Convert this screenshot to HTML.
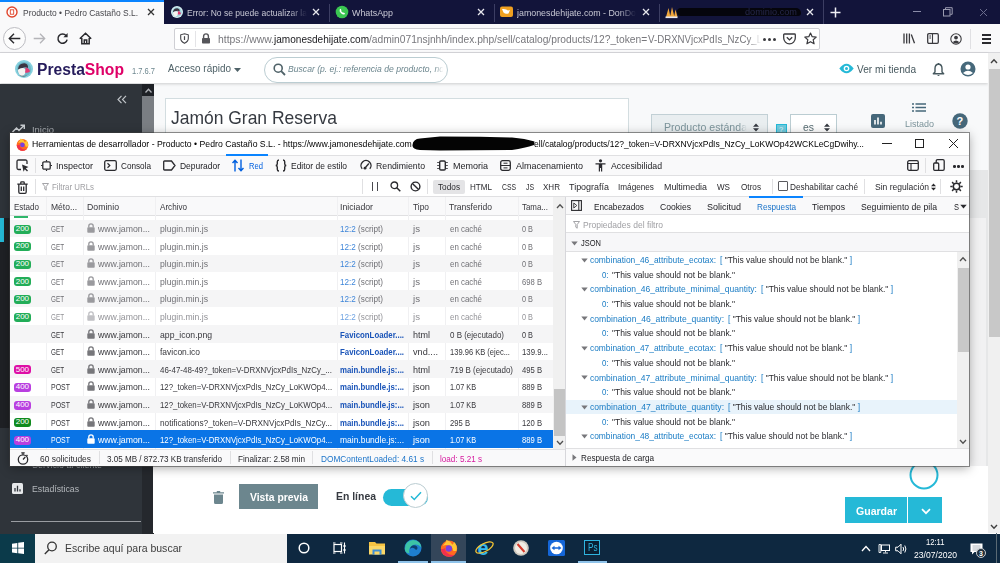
<!DOCTYPE html>
<html lang="es"><head><meta charset="utf-8"><title>Producto</title><style>
html,body{margin:0;padding:0;}
body{width:1000px;height:563px;overflow:hidden;position:relative;background:#fff;font-family:"Liberation Sans",sans-serif;}
div,span,svg{position:absolute;box-sizing:border-box;}
.t{white-space:nowrap;line-height:1;transform-origin:0 0;padding-bottom:4px;}
.t span{position:static;}
</style></head><body>
<div style="left:0px;top:0px;width:1000px;height:24px;background:#12143a;"></div>
<div style="left:0px;top:0px;width:164px;height:24px;background:#f9f9fa;border-top:2px solid #0a84ff;"></div>
<svg style="left:6px;top:6px;" width="12" height="12" viewBox="0 0 12 12"><circle cx="6" cy="6" r="5" fill="#fff" stroke="#e0452c" stroke-width="1.4"/><rect x="4.3" y="3.8" width="3.4" height="4.4" fill="none" stroke="#e0452c" stroke-width="0.9"/></svg>
<span class="t" style="left:23px;top:8.11px;font-size:9.8px;color:#48484d;transform:scaleX(0.861);">Producto • Pedro Castaño S.L.</span>
<svg style="left:147px;top:8px;" width="8" height="8" viewBox="0 0 8 8"><path d="M1 1 L7 7 M7 1 L1 7" stroke="#333" stroke-width="1.3" fill="none"/></svg>
<svg style="left:171px;top:6px;" width="12" height="12" viewBox="0 0 18 18"><circle cx="9" cy="9" r="9" fill="#d8eef2"/><circle cx="9" cy="9.200" r="7.200" fill="#9fd3dd"/><path d="M3 9.500 Q3.500 3 9.500 3.200 Q13.500 4 13 8 Q10 6.500 7.500 8 Q5 9 3 9.500z" fill="#3b3542"/><path d="M2.800 10 Q5.500 7.500 9 8.200 Q11 9 10.500 12 Q10 15.500 6.500 16 Q3.500 15 2.800 10z" fill="#f6f4f2"/><path d="M10.200 7.500 Q14.500 8 15 11.500 Q12.500 13.500 10 12.500 Q11 10 10.200 7.500z" fill="#e23d74"/></svg>
<span class="t" style="left:187px;top:8.11px;font-size:9.8px;color:#c8c8d4;-webkit-mask-image:linear-gradient(90deg,#000 85%,transparent);transform:scaleX(0.871);">Error: No se puede actualizar la</span>
<svg style="left:312px;top:8px;" width="8" height="8" viewBox="0 0 8 8"><path d="M1 1 L7 7 M7 1 L1 7" stroke="#e8e8ee" stroke-width="1.3" fill="none"/></svg>
<div style="left:329px;top:4px;width:1px;height:18px;background:#3c3e63;"></div>
<svg style="left:335px;top:5px;" width="14" height="14" viewBox="0 0 14 14"><circle cx="7" cy="7" r="6.3" fill="#3bc652"/><path d="M3 11.6 L3.9 9 " stroke="#3bc652" stroke-width="2"/><path d="M4.8 4.2 q0.8 -0.8 1.3 0.3 l0.3 0.9 q-0.6 0.6 0.6 1.7 q1 1 1.6 0.5 l0.9 0.4 q0.9 0.5 0.1 1.2 q-1.3 1 -3.6 -1 q-2.2 -2.2 -1.2 -4z" fill="#fff"/></svg>
<span class="t" style="left:352px;top:8.11px;font-size:9.8px;color:#c8c8d4;transform:scaleX(0.907);">WhatsApp</span>
<svg style="left:477px;top:8px;" width="8" height="8" viewBox="0 0 8 8"><path d="M1 1 L7 7 M7 1 L1 7" stroke="#e8e8ee" stroke-width="1.3" fill="none"/></svg>
<div style="left:494px;top:4px;width:1px;height:18px;background:#3c3e63;"></div>
<svg style="left:500px;top:6px;" width="13" height="12" viewBox="0 0 13 12"><rect x="0" y="0.5" width="13" height="10.5" rx="2" fill="#f0a020"/><path d="M2 3 q4 -0.5 6 1.5 l2 -0.5 l-1.5 3.5 q-3 1 -5 -1z" fill="#fff"/></svg>
<span class="t" style="left:517px;top:8.11px;font-size:9.8px;color:#c8c8d4;-webkit-mask-image:linear-gradient(90deg,#000 85%,transparent);transform:scaleX(0.903);">jamonesdehijate.com - DonDo</span>
<svg style="left:642px;top:8px;" width="8" height="8" viewBox="0 0 8 8"><path d="M1 1 L7 7 M7 1 L1 7" stroke="#e8e8ee" stroke-width="1.3" fill="none"/></svg>
<div style="left:659px;top:4px;width:1px;height:18px;background:#3c3e63;"></div>
<svg style="left:665px;top:6px;" width="13" height="13" viewBox="0 0 13 13"><path d="M1 11 L3.5 2 L5.5 11z M5 11 L7 1 L9.5 11z M9 11 L10.5 3.5 L12.5 11z" fill="#f0a63c"/><rect x="0.5" y="10.5" width="12" height="1.6" fill="#e7e7f0"/></svg>
<div style="left:677px;top:8px;width:124px;height:8px;background:#05050c;border-radius:4px 5px 3px 4px;"></div>
<span class="t" style="left:745px;top:8.11px;font-size:9.3px;color:#26284a;transform:scaleX(0.986);">dominio.com</span>
<svg style="left:806px;top:8px;" width="8" height="8" viewBox="0 0 8 8"><path d="M1 1 L7 7 M7 1 L1 7" stroke="#e8e8ee" stroke-width="1.3" fill="none"/></svg>
<div style="left:823px;top:0px;width:1px;height:24px;background:#3c3e63;"></div>
<svg style="left:830px;top:7px;" width="11" height="11" viewBox="0 0 11 11"><path d="M5.5 0.5 V10.500 M0.5 5.5 H10.5" stroke="#f0f0f5" stroke-width="1.5"/></svg>
<div style="left:913px;top:11px;width:8px;height:1px;background:#8a8ca8;"></div>
<svg style="left:943px;top:7px;" width="10" height="10" viewBox="0 0 10 10"><rect x="0.500" y="2.5" width="6.5" height="6.5" fill="none" stroke="#9a9bb0" stroke-width="1"/><path d="M2.5 2.500 V0.700 H9.200 V7.300 H7.200" fill="none" stroke="#9a9bb0" stroke-width="1"/></svg>
<svg style="left:978.5px;top:7.5px;" width="9.0" height="9.0" viewBox="0 0 9.0 9.0"><path d="M1 1 L8.0 8.0 M8.0 1 L1 8.0" stroke="#6a6c8c" stroke-width="1" fill="none"/></svg>
<div style="left:0px;top:24px;width:1000px;height:29px;background:#f9f9fa;border-bottom:1px solid #d7d7db;"></div>
<div style="left:3px;top:27px;width:23px;height:23px;border:1px solid #bdbdc2;border-radius:50%;background:#fcfcfc;"></div>
<svg style="left:8px;top:33px;" width="13" height="11" viewBox="0 0 13 11"><path d="M6 0.800 L1.3 5.500 L6 10.200 M1.500 5.500 H12.300" stroke="#2a2a2e" stroke-width="1.400" fill="none"/></svg>
<svg style="left:33px;top:33px;" width="13" height="11" viewBox="0 0 13 11"><path d="M7 0.800 L11.700 5.500 L7 10.200 M11.500 5.500 H0.700" stroke="#b4b4b8" stroke-width="1.300" fill="none"/></svg>
<svg style="left:56px;top:32px;" width="13" height="13" viewBox="0 0 13 13"><path d="M10.200 3.800 A4.600 4.600 0 1 0 11.100 7.600" stroke="#2a2a2e" stroke-width="1.500" fill="none"/><path d="M11.600 1 V5.200 H7.400z" fill="#2a2a2e"/></svg>
<svg style="left:79px;top:32px;" width="13" height="13" viewBox="0 0 13 13"><path d="M0.800 6.800 L6.500 1.300 L12.200 6.800 M2.800 6 V11.700 H10.200 V6 M5.300 11.700 V8 H7.700 V11.700" stroke="#2a2a2e" stroke-width="1.500" fill="none"/></svg>
<div style="left:174px;top:28px;width:646px;height:22px;background:#fff;border:1px solid #cfcfd4;border-radius:2px;"></div>
<svg style="left:180px;top:33px;" width="9" height="11" viewBox="0 0 9 11"><path d="M4.500 0.700 L8.300 1.800 V5.600 Q8.300 8.600 4.500 10.300 Q0.700 8.600 0.700 5.600 V1.800z" fill="none" stroke="#45454a" stroke-width="1.100"/><rect x="3.900" y="3.200" width="1.200" height="3.800" fill="#45454a"/></svg>
<div style="left:195px;top:31px;width:1px;height:16px;background:#e4e4e7;"></div>
<svg style="left:201px;top:33px;" width="10" height="11" viewBox="0 0 10 11"><path d="M2.600 5 V3.300 a2.400 2.400 0 0 1 4.800 0 V5" fill="none" stroke="#55555a" stroke-width="1.400"/><rect x="1" y="5" width="8" height="5.500" rx="0.800" fill="#55555a"/></svg>
<span class="t" style="left:218px;top:33.59px;font-size:11px;color:#77777c;transform:scaleX(0.944);">https://www.</span>
<span class="t" style="left:274px;top:33.59px;font-size:11px;color:#1a1a1e;transform:scaleX(0.914);">jamonesdehijate.com</span>
<span class="t" style="left:369px;top:33.59px;font-size:11px;color:#77777c;transform:scaleX(0.931);">/admin071nsjnhh/index.php/sell/catalog/products/12?_token=</span>
<span class="t" style="left:648px;top:33.59px;font-size:11px;color:#77777c;-webkit-mask-image:linear-gradient(90deg,#000 88%,transparent 99%);transform:scaleX(0.880);">V-DRXNVjcxPdIs_NzCy_L</span>
<div style="left:763px;top:38px;width:3px;height:3px;background:#3a3a3e;border-radius:50%;"></div>
<div style="left:768px;top:38px;width:3px;height:3px;background:#3a3a3e;border-radius:50%;"></div>
<div style="left:773px;top:38px;width:3px;height:3px;background:#3a3a3e;border-radius:50%;"></div>
<svg style="left:783px;top:33px;" width="13" height="12" viewBox="0 0 13 12"><path d="M1.500 1 H11.500 Q12.300 1 12.300 1.800 V5 A5.800 5.800 0 0 1 0.700 5 V1.800 Q0.700 1 1.500 1z" fill="none" stroke="#3a3a3e" stroke-width="1.300"/><path d="M3.800 4.300 L6.500 6.900 L9.200 4.300" fill="none" stroke="#3a3a3e" stroke-width="1.400"/></svg>
<svg style="left:804px;top:32px;" width="13" height="13" viewBox="0 0 13 13"><path d="M6.500 1 L8.200 4.700 L12.200 5.100 L9.200 7.800 L10.100 11.800 L6.500 9.700 L2.900 11.800 L3.800 7.800 L0.800 5.100 L4.800 4.700z" fill="none" stroke="#3a3a3e" stroke-width="1.200" stroke-linejoin="round"/></svg>
<svg style="left:903px;top:33px;" width="13" height="11" viewBox="0 0 13 11"><path d="M1 0.500 V10.500 M3.700 0.500 V10.500 M6.400 0.500 V10.500 M8.300 1.500 L11.500 10.300" stroke="#3a3a3e" stroke-width="1.300" fill="none"/></svg>
<svg style="left:927px;top:33px;" width="12" height="11" viewBox="0 0 12 11"><rect x="0.700" y="0.700" width="10.600" height="9.600" rx="1.200" fill="none" stroke="#3a3a3e" stroke-width="1.300"/><path d="M5.500 0.700 V10.300 M2.300 3 H4 M2.300 5 H4" stroke="#3a3a3e" stroke-width="1.100"/></svg>
<svg style="left:950px;top:33px;" width="12" height="12" viewBox="0 0 12 12"><circle cx="6" cy="6" r="5.200" fill="none" stroke="#3a3a3e" stroke-width="1.100"/><circle cx="6" cy="4.600" r="1.900" fill="#3a3a3e"/><path d="M2.600 9.300 Q6 5.800 9.400 9.300 Q6 11.500 2.600 9.300z" fill="#3a3a3e"/></svg>
<div style="left:970px;top:29px;width:1px;height:20px;background:#e0e0e3;"></div>
<div style="left:982px;top:34px;width:9px;height:1.5px;background:#2a2a2e;"></div>
<div style="left:982px;top:38px;width:9px;height:1.5px;background:#2a2a2e;"></div>
<div style="left:982px;top:42px;width:9px;height:1.5px;background:#2a2a2e;"></div>
<div style="left:0px;top:53px;width:988px;height:480px;background:#f8f9fa;"></div>
<div style="left:153px;top:170px;width:835px;height:300px;background:#e6e7e8;"></div>
<div style="left:153px;top:218px;width:833px;height:250px;background:#f1f1f2;"></div>
<div style="left:0px;top:53px;width:988px;height:30px;background:#fff;box-shadow:0 1px 3px rgba(0,0,0,0.18);"></div>
<svg style="left:15px;top:60px;" width="18" height="18" viewBox="0 0 18 18"><circle cx="9" cy="9" r="9" fill="#86d0de"/><circle cx="9" cy="9.200" r="7.200" fill="#6fb9c9"/><path d="M3 9.500 Q3.500 3 9.500 3.200 Q13.500 4 13 8 Q10 6.500 7.500 8 Q5 9 3 9.500z" fill="#3b3542"/><path d="M2.800 10 Q5.500 7.500 9 8.200 Q11 9 10.500 12 Q10 15.500 6.500 16 Q3.500 15 2.800 10z" fill="#f6f4f2"/><path d="M10.200 7.500 Q14.500 8 15 11.500 Q12.500 13.500 10 12.500 Q11 10 10.200 7.500z" fill="#e23d74"/><path d="M4 15.200 Q8 17.500 12.500 15.500 Q9 16.500 4 15.200z" fill="#5a4a45"/></svg>
<span class="t" style="left:37px;top:61.5px;font-size:16px;color:#251b5b;font-weight:bold;transform:scaleX(0.978);"><span style="color:#251b5b">Presta</span><span style="color:#df0067">Shop</span></span>
<span class="t" style="left:132px;top:67.41px;font-size:8.3px;color:#6c868e;transform:scaleX(0.906);">1.7.6.7</span>
<span class="t" style="left:168px;top:63.47px;font-size:10.7px;color:#4f6268;transform:scaleX(0.930);">Acceso rápido</span>
<svg style="left:234px;top:68px;" width="7" height="4" viewBox="0 0 7 4"><path d="M0 0 H7 L3.500 4z" fill="#4f6268"/></svg>
<div style="left:264px;top:57px;width:184px;height:26px;background:#fff;border:1px solid #bbcdd2;border-radius:13px;"></div>
<svg style="left:273px;top:63px;" width="13" height="13" viewBox="0 0 13 13"><circle cx="5.200" cy="5.200" r="4" fill="none" stroke="#4f6268" stroke-width="1.600"/><path d="M8.200 8.200 L12 12" stroke="#4f6268" stroke-width="1.800"/></svg>
<span class="t" style="left:288px;top:65.41px;font-size:9.3px;color:#6c868e;font-style:italic;-webkit-mask-image:linear-gradient(90deg,#000 94%,transparent);transform:scaleX(0.926);">Buscar (p. ej.: referencia de producto, no</span>
<svg style="left:839px;top:63px;" width="15" height="11" viewBox="0 0 15 11"><path d="M0.300 5.500 Q7.500 -4 14.700 5.500 Q7.500 15 0.300 5.500z" fill="#25b9d7"/><circle cx="7.500" cy="5.500" r="2.800" fill="#fff"/><circle cx="7.500" cy="5.500" r="1.500" fill="#25b9d7"/></svg>
<span class="t" style="left:857px;top:64.47px;font-size:10.7px;color:#46585e;transform:scaleX(0.946);">Ver mi tienda</span>
<svg style="left:932px;top:62px;" width="13" height="15" viewBox="0 0 13 15"><path d="M6.500 1 Q6.500 2 6.500 2 Q10 2.500 10 6.500 V10 L11.700 11.700 H1.300 L3 10 V6.500 Q3 2.500 6.500 2" fill="none" stroke="#46585e" stroke-width="1.400" stroke-linejoin="round"/><path d="M5.200 13 H7.800 Q6.500 15 5.200 13z" fill="#46585e"/></svg>
<svg style="left:960px;top:61px;" width="16" height="16" viewBox="0 0 16 16"><circle cx="8" cy="8" r="7.500" fill="#46687a"/><circle cx="8" cy="6" r="2.600" fill="#fff"/><path d="M3 12 Q8 7.500 13 12 Q8 16 3 12z" fill="#fff"/></svg>
<div style="left:0px;top:83.5px;width:142px;height:450px;background:#2f343a;"></div>
<div style="left:142px;top:83.5px;width:11.5px;height:450px;background:#25282d;"></div>
<div style="left:142px;top:83.5px;width:11.5px;height:12.5px;background:#1e2126;"></div>
<svg style="left:144.5px;top:87.5px;" width="7" height="5" viewBox="0 0 7 5"><path d="M0.500 4.500 L3.500 1.300 L6.500 4.500" fill="none" stroke="#b0b3b8" stroke-width="1.300"/></svg>
<div style="left:142px;top:96px;width:11.5px;height:370px;background:#7a7e83;"></div>
<svg style="left:117px;top:95px;" width="10" height="9" viewBox="0 0 10 9"><path d="M4.500 0.800 L1 4.500 L4.500 8.200 M9 0.800 L5.500 4.500 L9 8.200" fill="none" stroke="#c0c4c8" stroke-width="1.200"/></svg>
<svg style="left:12px;top:124px;" width="13" height="9" viewBox="0 0 13 9"><path d="M0.500 8 L4.500 4 L7 6.500 L12 1.500 M8.500 1.200 H12.300 V5" fill="none" stroke="#c8ccd0" stroke-width="1.500"/></svg>
<span class="t" style="left:32px;top:124.65px;font-size:9.9px;color:#a9adb2;transform:scaleX(0.954);">Inicio</span>
<span class="t" style="left:32px;top:459.65px;font-size:9.9px;color:#a9adb2;transform:scaleX(0.911);">Servicio al cliente</span>
<svg style="left:12px;top:483px;" width="11" height="11" viewBox="0 0 11 11"><rect x="0" y="0" width="11" height="11" rx="1.500" fill="#e6e8ea"/><path d="M3 8.500 V5 M5.500 8.500 V2.800 M8 8.500 V6.300" stroke="#2f3339" stroke-width="1.300"/></svg>
<span class="t" style="left:32px;top:483.65px;font-size:9.9px;color:#b4b8bc;transform:scaleX(0.883);">Estadísticas</span>
<div style="left:11px;top:521px;width:130px;height:1px;background:#9a9da2;"></div>
<div style="left:165px;top:98px;width:464px;height:60px;background:#fff;border:1px solid #d3dde0;"></div>
<span class="t" style="left:171px;top:108.53px;font-size:18.6px;color:#363a41;transform:scaleX(0.939);">Jamón Gran Reserva</span>
<div style="left:651px;top:114px;width:117px;height:28px;background:#e9eef0;border:1px solid #c2d0d5;"></div>
<span class="t" style="left:664px;top:121.88px;font-size:11.5px;color:#7c949b;-webkit-mask-image:linear-gradient(90deg,#000 90%,transparent);transform:scaleX(0.921);">Producto estánda</span>
<svg style="left:753px;top:123px;" width="6" height="9" viewBox="0 0 6 9"><path d="M0 3.700 L3 0.500 L6 3.700z M0 5.300 L3 8.500 L6 5.300z" fill="#363a41"/></svg>
<div style="left:775.5px;top:123.5px;width:11px;height:12px;border:1px solid #25b9d7;background:#6fcbde;"></div>
<span class="t" style="left:779px;top:126px;font-size:7.5px;color:#e8f7fa;">?</span>
<div style="left:790px;top:114px;width:47px;height:28px;background:#fff;border:1px solid #bbcdd2;"></div>
<span class="t" style="left:803px;top:121.88px;font-size:11.5px;color:#576c72;transform:scaleX(0.905);">es</span>
<svg style="left:824px;top:123px;" width="6" height="9" viewBox="0 0 6 9"><path d="M0 3.700 L3 0.500 L6 3.700z M0 5.300 L3 8.500 L6 5.300z" fill="#363a41"/></svg>
<svg style="left:871px;top:114px;" width="14" height="14" viewBox="0 0 14 14"><rect x="0" y="0" width="14" height="14" rx="2" fill="#46687a"/><path d="M4 10.500 V6 M7 10.500 V3.500 M10 10.500 V7.800" stroke="#fff" stroke-width="1.600"/></svg>
<svg style="left:912px;top:103px;" width="14" height="9" viewBox="0 0 14 9"><path d="M0 1 H2 M3.500 1 H14 M0 4.500 H2 M3.500 4.500 H14 M0 8 H2 M3.500 8 H14" stroke="#46687a" stroke-width="1.700"/></svg>
<span class="t" style="left:905px;top:119.41px;font-size:9.8px;color:#7c949b;transform:scaleX(0.918);">Listado</span>
<svg style="left:952px;top:113px;" width="16" height="16" viewBox="0 0 16 16"><circle cx="8" cy="8" r="7.700" fill="#46687a"/></svg>
<span class="t" style="left:956.5px;top:115.59px;font-size:11px;color:#fff;font-weight:bold;">?</span>
<div style="left:153px;top:466px;width:835px;height:67px;background:#fff;"></div>
<svg style="left:212.5px;top:490.5px;" width="11" height="13" viewBox="0 0 11 13"><path d="M1 3.500 H10 V11.500 Q10 13 8.500 13 H2.500 Q1 13 1 11.500z M0 1.200 H11 V2.600 H0z M3.800 0 H7.200 V1.500 H3.800z" fill="#6c868e"/></svg>
<div style="left:239px;top:484px;width:79px;height:25px;background:#6c868e;"></div>
<span class="t" style="left:250px;top:491.59px;font-size:11px;color:#fff;font-weight:bold;transform:scaleX(0.942);">Vista previa</span>
<span class="t" style="left:336px;top:490.59px;font-size:11px;color:#363a41;font-weight:bold;transform:scaleX(0.948);">En línea</span>
<div style="left:383px;top:489px;width:45px;height:17px;background:#25b9d7;border-radius:9px;"></div>
<div style="left:403px;top:483px;width:25px;height:25px;background:#fff;border:1px solid #bbcdd2;border-radius:50%;"></div>
<svg style="left:410px;top:491px;" width="12" height="10" viewBox="0 0 12 10"><path d="M1 5.200 L4.300 8.500 L11 1.200" fill="none" stroke="#25b9d7" stroke-width="1.500"/></svg>
<svg style="left:909px;top:460px;" width="30" height="30" viewBox="0 0 30 30"><circle cx="15" cy="15" r="13.500" fill="none" stroke="#25b9d7" stroke-width="2"/></svg>
<div style="left:845px;top:497px;width:62px;height:26px;background:#25b9d7;"></div>
<div style="left:908px;top:497px;width:34px;height:26px;background:#25b9d7;"></div>
<span class="t" style="left:856px;top:505.59px;font-size:11px;color:#fff;font-weight:bold;transform:scaleX(0.958);">Guardar</span>
<svg style="left:921px;top:508px;" width="10" height="7" viewBox="0 0 10 7"><path d="M1 1.200 L5 5.200 L9 1.200" fill="none" stroke="#fff" stroke-width="1.700"/></svg>
<div style="left:988px;top:53px;width:12px;height:480px;background:#f0f0f0;"></div>
<div style="left:989px;top:69px;width:11px;height:268px;background:#c8c8c8;"></div>
<svg style="left:990px;top:58px;" width="8" height="6" viewBox="0 0 8 6"><path d="M1 5 L4 1.800 L7 5" fill="none" stroke="#404040" stroke-width="1.400"/></svg>
<svg style="left:990px;top:524px;" width="8" height="6" viewBox="0 0 8 6"><path d="M1 1 L4 4.200 L7 1" fill="none" stroke="#404040" stroke-width="1.400"/></svg>
<div style="left:0px;top:533.5px;width:1000px;height:30px;background:#0e2840;"></div>
<div style="left:0px;top:533.5px;width:35px;height:30px;background:#0b3a4a;"></div>
<svg style="left:12px;top:542px;" width="12" height="12" viewBox="0 0 12 12"><path d="M0 1.700 L5.300 0.900 V5.700 H0z M6.200 0.800 L12 0 V5.700 H6.200z M0 6.500 H5.300 V11.200 L0 10.400z M6.200 6.500 H12 V12 L6.200 11.200z" fill="#fff"/></svg>
<div style="left:35px;top:533.5px;width:252px;height:30px;background:#f2f2f2;"></div>
<svg style="left:44px;top:541px;" width="13" height="14" viewBox="0 0 13 14"><circle cx="8" cy="5.500" r="4.300" fill="none" stroke="#333" stroke-width="1.300"/><path d="M5 8.800 L0.800 13" stroke="#333" stroke-width="1.400"/></svg>
<span class="t" style="left:65px;top:542.65px;font-size:11.4px;color:#3c3c3c;transform:scaleX(0.924);">Escribe aquí para buscar</span>
<svg style="left:298px;top:542px;" width="12" height="12" viewBox="0 0 12 12"><circle cx="6" cy="6" r="4.800" fill="none" stroke="#fff" stroke-width="1.500"/></svg>
<svg style="left:333px;top:542px;" width="14" height="12" viewBox="0 0 14 12"><rect x="1" y="2.500" width="7.500" height="7" fill="none" stroke="#fff" stroke-width="1.200"/><path d="M0 1 H2.500 M7 1 H9.500 M0 11 H2.500 M7 11 H9.500 M11.500 0.500 V11.500 M10 4 H13 M10 8 H13" stroke="#fff" stroke-width="1.100" fill="none"/></svg>
<svg style="left:369px;top:541px;" width="16" height="14" viewBox="0 0 16 14"><path d="M0 1 H6 L7.500 2.500 H16 V13 H0z" fill="#f6c443"/><rect x="0" y="5" width="16" height="8.500" fill="#fbd868"/><rect x="3.500" y="8.500" width="9" height="5" fill="#3f8fd6"/><rect x="5.500" y="10.500" width="5" height="3" fill="#fbd868"/></svg>
<div style="left:398px;top:561px;width:30px;height:2px;background:#8fc3ea;"></div>
<svg style="left:404px;top:539px;" width="18" height="18" viewBox="0 0 18 18"><circle cx="9" cy="9" r="8.500" fill="#1e7fd0"/><path d="M0.800 10 Q1 2 9 1 Q17 1.500 17.400 8.500 Q13 3.500 7.500 7 Q4 10 5.500 14.500 Q1 14 0.800 10z" fill="#3cc3a5"/><path d="M6 10 Q7 5.500 11.500 6.500 Q14.500 8 13 10.500 Q11 11 10.500 9.500 Q8 8 6 10z" fill="#0d3f6e"/></svg>
<div style="left:431px;top:533.5px;width:35px;height:30px;background:#34465a;"></div>
<div style="left:431px;top:561px;width:35px;height:2px;background:#8fc3ea;"></div>
<svg style="left:440px;top:539px;" width="18" height="18" viewBox="0 0 13 13"><circle cx="6.500" cy="7" r="5.900" fill="#ff6a1f"/><path d="M12 8.500 Q12.700 4.500 10 2 Q10 3.500 9 4.200 Q7.500 1.500 4.500 0.600 Q5 2 3.500 3 Q2.500 3.800 2.200 5 Q4 4 6 4.600 Q9 5 9.500 8.500 Q11 9 12 8.500z" fill="#ffc533"/><circle cx="6.400" cy="6.900" r="2.300" fill="#7a3fe0"/><path d="M0.700 7 Q1 11 4.500 12.500 Q8 13.500 10.500 11.500 Q7 12 5 10 Q3.500 8.500 3.800 6.500 Q2 7.500 0.700 7z" fill="#f0304f"/></svg>
<svg style="left:475px;top:539px;" width="19" height="18" viewBox="0 0 19 18"><text x="2.500" y="16" font-family="Liberation Sans, sans-serif" font-size="20" font-weight="bold" fill="#35b8ee">e</text><ellipse cx="9.500" cy="8.500" rx="9.500" ry="4" fill="none" stroke="#f4c534" stroke-width="1.300" transform="rotate(-28 9.500 8.500)"/></svg>
<svg style="left:513px;top:540px;" width="16" height="16" viewBox="0 0 16 16"><circle cx="8" cy="8" r="7.800" fill="#cfc9bf"/><circle cx="8" cy="8" r="6" fill="#f2ede4"/><path d="M4.500 4 L11.500 12" stroke="#d43a2a" stroke-width="2"/></svg>
<svg style="left:548px;top:540px;" width="17" height="16" viewBox="0 0 17 16"><rect x="0" y="0" width="17" height="16" rx="1.500" fill="#1466d8"/><circle cx="8.500" cy="8" r="6.300" fill="#fff"/><path d="M3.500 8 L6.500 5.800 V7.200 H10.500 V5.800 L13.500 8 L10.500 10.200 V8.800 H6.500 V10.200z" fill="#1466d8"/></svg>
<div style="left:578px;top:561px;width:29px;height:2px;background:#8fc3ea;"></div>
<div style="left:584px;top:540px;width:16px;height:15px;background:#0a1f33;border:1px solid #2fb4e0;"></div>
<span class="t" style="left:587.5px;top:542.5px;font-size:10px;color:#2fb4e0;transform:scaleX(0.814);">Ps</span>
<svg style="left:861px;top:545px;" width="10" height="7" viewBox="0 0 10 7"><path d="M1 6 L5 1.500 L9 6" fill="none" stroke="#fff" stroke-width="1.300"/></svg>
<svg style="left:878px;top:543px;" width="13" height="12" viewBox="0 0 13 12"><rect x="3.500" y="2" width="8" height="5.500" fill="none" stroke="#fff" stroke-width="1"/><path d="M7.500 7.500 V9.500 M5 10 H10 M1 1.500 H2.800 V9.500 H1z" stroke="#fff" stroke-width="0.900" fill="none"/></svg>
<svg style="left:895px;top:543px;" width="13" height="12" viewBox="0 0 13 12"><path d="M0.700 4.200 H3 L6 1.200 V10.800 L3 7.800 H0.700z" fill="none" stroke="#fff" stroke-width="1"/><path d="M8 4 Q9.300 6 8 8 M9.800 2.500 Q12 6 9.800 9.500" fill="none" stroke="#fff" stroke-width="1"/></svg>
<span class="t" style="left:926px;top:537.41px;font-size:9.8px;color:#fff;transform:scaleX(0.777);">12:11</span>
<span class="t" style="left:914px;top:550.41px;font-size:9.8px;color:#fff;transform:scaleX(0.877);">23/07/2020</span>
<svg style="left:970px;top:543px;" width="13" height="12" viewBox="0 0 13 12"><path d="M0.500 0.500 H12.500 V9 H4.500 L2 11.500 V9 H0.500z" fill="#fff"/><path d="M2.500 3 H10.500 M2.500 5 H10.500 M2.500 7 H8" stroke="#5a6878" stroke-width="0.500"/></svg>
<div style="left:976px;top:548px;width:10px;height:10px;background:#20303c;border:1px solid #c8ccd0;border-radius:50%;"></div>
<span class="t" style="left:979px;top:550px;font-size:7px;color:#fff;font-weight:bold;">3</span>
<div style="left:996px;top:533px;width:1px;height:30px;background:#5a6a74;"></div>
<div style="left:0px;top:218px;width:10px;height:24px;background:#202226;"></div>
<div style="left:0px;top:218px;width:4px;height:24px;background:#25b9d7;"></div>
<div style="left:0px;top:242px;width:10px;height:186px;background:#1f2125;"></div>
<div style="left:10px;top:133px;width:959px;height:333px;background:#fff;box-shadow:0 0 0 1px rgba(60,60,60,0.55),0 2px 10px rgba(0,0,0,0.35);"></div>
<svg style="left:16px;top:138px;" width="13" height="13" viewBox="0 0 13 13"><circle cx="6.500" cy="7" r="5.900" fill="#ff6a1f"/><path d="M12 8.500 Q12.700 4.500 10 2 Q10 3.500 9 4.200 Q7.500 1.500 4.500 0.600 Q5 2 3.500 3 Q2.500 3.800 2.200 5 Q4 4 6 4.600 Q9 5 9.500 8.500 Q11 9 12 8.500z" fill="#ffc533"/><circle cx="6.400" cy="6.900" r="2.300" fill="#7a3fe0"/><path d="M0.700 7 Q1 11 4.500 12.500 Q8 13.500 10.500 11.500 Q7 12 5 10 Q3.500 8.500 3.800 6.500 Q2 7.500 0.700 7z" fill="#f0304f"/></svg>
<span class="t" style="left:32px;top:139.41px;font-size:9.8px;color:#000;transform:scaleX(0.886);">Herramientas de desarrollador - Producto • Pedro Castaño S.L. - https://www.jamonesdehijate.com</span>
<svg style="left:410px;top:134px;" width="128" height="20" viewBox="0 0 128 20"><path d="M2.500 11 Q3 5 10 4.500 L30 2.500 L70 2.700 L102 3.500 Q115 4.500 124.500 7.500 L124 11 Q115 14 102 16 L30 16.500 L10 16 Q2 15 2.500 11z" fill="#040404"/></svg>
<span class="t" style="left:534px;top:139.41px;font-size:9.8px;color:#000;transform:scaleX(0.869);">ell/catalog/products/12?_token=V-DRXNVjcxPdIs_NzCy_LoKWOp42WCKLeCgDwihy...</span>
<div style="left:882px;top:143px;width:10px;height:1px;background:#222;"></div>
<div style="left:915px;top:138.5px;width:9px;height:9px;border:1px solid #222;"></div>
<svg style="left:948.0px;top:137.5px;" width="11.0" height="11.0" viewBox="0 0 11.0 11.0"><path d="M1 1 L10.0 10.0 M10.0 1 L1 10.0" stroke="#222" stroke-width="1" fill="none"/></svg>
<div style="left:10px;top:155px;width:959px;height:21px;background:#f9f9fa;border-top:1px solid #e0e0e2;border-bottom:1px solid #e0e0e2;"></div>
<svg style="left:16px;top:159px;" width="13" height="13" viewBox="0 0 13 13"><path d="M11 5 V2.500 Q11 1 9.500 1 H2.500 Q1 1 1 2.500 V9 Q1 10.500 2.500 10.500 H5" fill="none" stroke="#2a2a2e" stroke-width="1.300"/><path d="M6 5.500 L12.500 8 L9.800 9.200 L12 11.500 L11 12.500 L8.800 10.200 L7.600 12.800z" fill="#2a2a2e"/></svg>
<div style="left:35px;top:158px;width:1px;height:15px;background:#e0e0e2;"></div>
<svg style="left:41px;top:160px;" width="11" height="11" viewBox="0 0 11 11"><rect x="1.800" y="1.800" width="7.400" height="7.400" rx="1.200" fill="none" stroke="#2a2a2e" stroke-width="1.300"/><path d="M5.500 0 V1.500 M5.500 9.500 V11 M0 5.500 H1.500 M9.500 5.500 H11" stroke="#2a2a2e" stroke-width="1.200"/></svg>
<span class="t" style="left:56px;top:160.91px;font-size:9.8px;color:#1c1c20;transform:scaleX(0.918);">Inspector</span>
<svg style="left:104px;top:160px;" width="13" height="11" viewBox="0 0 13 11"><rect x="0.700" y="0.700" width="11.600" height="9.600" rx="1.500" fill="none" stroke="#2a2a2e" stroke-width="1.300"/><path d="M3.500 3.300 L5.800 5.500 L3.500 7.700" fill="none" stroke="#2a2a2e" stroke-width="1.200"/></svg>
<span class="t" style="left:121px;top:160.91px;font-size:9.8px;color:#1c1c20;transform:scaleX(0.834);">Consola</span>
<svg style="left:163px;top:160px;" width="13" height="11" viewBox="0 0 13 11"><path d="M1.500 1 H8.500 L12 5.500 L8.500 10 H1.500 Q0.700 10 0.700 9.200 V1.800 Q0.700 1 1.500 1z" fill="none" stroke="#2a2a2e" stroke-width="1.300"/></svg>
<span class="t" style="left:180px;top:160.91px;font-size:9.8px;color:#1c1c20;transform:scaleX(0.864);">Depurador</span>
<div style="left:226px;top:154px;width:42px;height:2px;background:#0a84ff;"></div>
<svg style="left:232px;top:159px;" width="12" height="13" viewBox="0 0 12 13"><path d="M3 12.500 V1.500 M0.500 4 L3 1.200 L5.500 4 M9 0.500 V11.500 M6.500 9 L9 11.800 L11.500 9" fill="none" stroke="#0060df" stroke-width="1.400"/></svg>
<span class="t" style="left:249px;top:160.91px;font-size:9.8px;color:#0060df;transform:scaleX(0.778);">Red</span>
<svg style="left:275px;top:159px;" width="12" height="13" viewBox="0 0 12 13"><path d="M4 1 Q2.300 1 2.300 2.800 V4.800 Q2.300 6.300 0.800 6.500 Q2.300 6.700 2.300 8.200 V10.200 Q2.300 12 4 12 M8 1 Q9.700 1 9.700 2.800 V4.800 Q9.700 6.300 11.200 6.500 Q9.700 6.700 9.700 8.200 V10.200 Q9.700 12 8 12" fill="none" stroke="#2a2a2e" stroke-width="1.400"/></svg>
<span class="t" style="left:291px;top:160.91px;font-size:9.8px;color:#1c1c20;transform:scaleX(0.864);">Editor de estilo</span>
<svg style="left:360px;top:159px;" width="12" height="12" viewBox="0 0 12 12"><path d="M2.200 9.800 A5 5 0 1 1 9.800 9.800" fill="none" stroke="#2a2a2e" stroke-width="1.400"/><path d="M5.500 8.500 L8.800 4.500" stroke="#2a2a2e" stroke-width="1.300"/><circle cx="5" cy="9.200" r="1.400" fill="#2a2a2e"/></svg>
<span class="t" style="left:376px;top:160.91px;font-size:9.8px;color:#1c1c20;transform:scaleX(0.891);">Rendimiento</span>
<svg style="left:437px;top:160px;" width="11" height="11" viewBox="0 0 11 11"><rect x="2.700" y="1" width="5.600" height="9" rx="1.200" fill="none" stroke="#2a2a2e" stroke-width="1.400"/><path d="M0.300 2.500 H1.800 M0.300 5.500 H1.800 M0.300 8.500 H1.800 M9.200 2.500 H10.700 M9.200 5.500 H10.700 M9.200 8.500 H10.700" stroke="#2a2a2e" stroke-width="1"/></svg>
<span class="t" style="left:453px;top:160.91px;font-size:9.8px;color:#1c1c20;transform:scaleX(0.918);">Memoria</span>
<svg style="left:500px;top:160px;" width="11" height="11" viewBox="0 0 11 11"><rect x="0.700" y="0.700" width="9.600" height="9.600" rx="1.800" fill="none" stroke="#2a2a2e" stroke-width="1.300"/><path d="M0.700 5.500 H10.300 M3.500 3.200 H7.500 M3.500 7.900 H7.500" stroke="#2a2a2e" stroke-width="1"/></svg>
<span class="t" style="left:516px;top:160.91px;font-size:9.8px;color:#1c1c20;transform:scaleX(0.918);">Almacenamiento</span>
<svg style="left:595px;top:159px;" width="11" height="13" viewBox="0 0 11 13"><circle cx="5.500" cy="1.800" r="1.600" fill="#2a2a2e"/><path d="M0.500 4.200 H10.500 V5.600 H7.200 V12.500 H6 V9 H5 V12.500 H3.800 V5.600 H0.500z" fill="#2a2a2e"/></svg>
<span class="t" style="left:611px;top:160.91px;font-size:9.8px;color:#1c1c20;transform:scaleX(0.892);">Accesibilidad</span>
<svg style="left:907px;top:160px;" width="12" height="11" viewBox="0 0 12 11"><rect x="0.700" y="0.700" width="10.600" height="9.600" rx="1.500" fill="none" stroke="#2a2a2e" stroke-width="1.300"/><path d="M0.700 3.500 H11.300 M4 3.500 V10.300" stroke="#2a2a2e" stroke-width="1.100"/></svg>
<div style="left:925px;top:158px;width:1px;height:15px;background:#e0e0e2;"></div>
<svg style="left:933px;top:159px;" width="12" height="12" viewBox="0 0 12 12"><rect x="3.200" y="0.700" width="8" height="10.600" rx="1.300" fill="none" stroke="#2a2a2e" stroke-width="1.300"/><rect x="0.700" y="4" width="5" height="7.300" rx="1" fill="#f9f9fa" stroke="#2a2a2e" stroke-width="1.300"/></svg>
<div style="left:953px;top:165px;width:2.5px;height:2.5px;background:#2a2a2e;border-radius:50%;"></div>
<div style="left:957px;top:165px;width:2.5px;height:2.5px;background:#2a2a2e;border-radius:50%;"></div>
<div style="left:961px;top:165px;width:2.5px;height:2.5px;background:#2a2a2e;border-radius:50%;"></div>
<div style="left:10px;top:176px;width:959px;height:21px;background:#fff;border-bottom:1px solid #e0e0e2;"></div>
<svg style="left:17px;top:181px;" width="11" height="13" viewBox="0 0 11 13"><path d="M1.800 3.500 V11 Q1.800 12.300 3 12.300 H8 Q9.200 12.300 9.200 11 V3.500 M0.300 3.200 H10.700 M3.800 3 V1.500 Q3.800 0.800 4.500 0.800 H6.500 Q7.200 0.800 7.200 1.500 V3 M4.300 5.500 V10 M6.700 5.500 V10" fill="none" stroke="#2a2a2e" stroke-width="1.300"/></svg>
<div style="left:35px;top:179px;width:1px;height:15px;background:#e0e0e2;"></div>
<svg style="left:42px;top:183px;" width="7" height="8" viewBox="0 0 7 8"><path d="M0.500 0.500 H6.500 L4.200 3.500 V7.200 L2.800 6.200 V3.500z" fill="none" stroke="#9a9a9e" stroke-width="0.900"/></svg>
<span class="t" style="left:52px;top:182.41px;font-size:9.8px;color:#a0a0a4;transform:scaleX(0.804);">Filtrar URLs</span>
<div style="left:362px;top:179px;width:1px;height:15px;background:#e0e0e2;"></div>
<div style="left:371.5px;top:182px;width:1px;height:9px;background:#4a4a4f;"></div>
<div style="left:377px;top:182px;width:1px;height:9px;background:#4a4a4f;"></div>
<svg style="left:390px;top:181px;" width="11" height="11" viewBox="0 0 11 11"><circle cx="4.300" cy="4.300" r="3.300" fill="none" stroke="#2a2a2e" stroke-width="1.300"/><path d="M6.800 6.800 L10.300 10.300" stroke="#2a2a2e" stroke-width="1.500"/></svg>
<svg style="left:410px;top:181px;" width="11" height="11" viewBox="0 0 11 11"><circle cx="5.500" cy="5.500" r="4.400" fill="none" stroke="#2a2a2e" stroke-width="1.400"/><path d="M2.400 2.400 L8.600 8.600" stroke="#2a2a2e" stroke-width="1.400"/></svg>
<div style="left:427px;top:179px;width:1px;height:15px;background:#e0e0e2;"></div>
<div style="left:433px;top:180px;width:32px;height:14px;background:#e4e4e6;border-radius:2px;"></div>
<span class="t" style="left:438px;top:183.41px;font-size:9.3px;color:#2a2a2e;transform:scaleX(0.887);">Todos</span>
<span class="t" style="left:470px;top:183.41px;font-size:9.3px;color:#2a2a2e;transform:scaleX(0.869);">HTML</span>
<span class="t" style="left:502px;top:183.41px;font-size:9.3px;color:#2a2a2e;transform:scaleX(0.732);">CSS</span>
<span class="t" style="left:526px;top:183.41px;font-size:9.3px;color:#2a2a2e;transform:scaleX(0.737);">JS</span>
<span class="t" style="left:543px;top:183.41px;font-size:9.3px;color:#2a2a2e;transform:scaleX(0.866);">XHR</span>
<span class="t" style="left:569px;top:183.41px;font-size:9.3px;color:#2a2a2e;transform:scaleX(0.963);">Tipografía</span>
<span class="t" style="left:618px;top:183.41px;font-size:9.3px;color:#2a2a2e;transform:scaleX(0.881);">Imágenes</span>
<span class="t" style="left:664px;top:183.41px;font-size:9.3px;color:#2a2a2e;transform:scaleX(0.957);">Multimedia</span>
<span class="t" style="left:717px;top:183.41px;font-size:9.3px;color:#2a2a2e;transform:scaleX(0.868);">WS</span>
<span class="t" style="left:741px;top:183.41px;font-size:9.3px;color:#2a2a2e;transform:scaleX(0.880);">Otros</span>
<div style="left:772px;top:179px;width:1px;height:15px;background:#e0e0e2;"></div>
<div style="left:778px;top:181px;width:10px;height:10px;background:#fff;border:1px solid #5a5a5e;border-radius:1px;"></div>
<span class="t" style="left:790px;top:183.41px;font-size:9.3px;color:#2a2a2e;transform:scaleX(0.889);">Deshabilitar caché</span>
<div style="left:864px;top:179px;width:1px;height:15px;background:#e0e0e2;"></div>
<span class="t" style="left:875px;top:183.41px;font-size:9.3px;color:#2a2a2e;transform:scaleX(0.916);">Sin regulación</span>
<svg style="left:931px;top:183px;" width="5" height="8" viewBox="0 0 5 8"><path d="M0 3.200 L2.500 0.500 L5 3.200z M0 4.800 L2.500 7.500 L5 4.800z" fill="#2a2a2e"/></svg>
<div style="left:940px;top:179px;width:1px;height:15px;background:#e0e0e2;"></div>
<svg style="left:950px;top:180px;" width="13" height="13" viewBox="0 0 13 13"><circle cx="6.500" cy="6.500" r="3.200" fill="none" stroke="#2a2a2e" stroke-width="1.500"/><path d="M6.500 0.300 V2.600 M6.500 10.400 V12.700 M0.300 6.500 H2.600 M10.400 6.500 H12.700 M2.100 2.100 L3.700 3.700 M9.300 9.300 L10.900 10.900 M2.100 10.900 L3.700 9.300 M9.300 3.700 L10.900 2.100" stroke="#2a2a2e" stroke-width="1.500"/></svg>
<div style="left:10px;top:197px;width:556px;height:19px;background:#f9f9fa;border-bottom:1px solid #e0e0e2;"></div>
<span class="t" style="left:14px;top:202.41px;font-size:9.8px;color:#38383d;transform:scaleX(0.819);">Estado</span>
<span class="t" style="left:51px;top:202.41px;font-size:9.8px;color:#38383d;transform:scaleX(0.868);">Méto...</span>
<span class="t" style="left:87px;top:202.41px;font-size:9.8px;color:#38383d;transform:scaleX(0.890);">Dominio</span>
<span class="t" style="left:160px;top:202.41px;font-size:9.8px;color:#38383d;transform:scaleX(0.826);">Archivo</span>
<span class="t" style="left:340px;top:202.41px;font-size:9.8px;color:#38383d;transform:scaleX(0.891);">Iniciador</span>
<span class="t" style="left:413px;top:202.41px;font-size:9.8px;color:#38383d;transform:scaleX(0.855);">Tipo</span>
<span class="t" style="left:449px;top:202.41px;font-size:9.8px;color:#38383d;transform:scaleX(0.874);">Transferido</span>
<span class="t" style="left:522px;top:202.41px;font-size:9.8px;color:#38383d;transform:scaleX(0.809);">Tama...</span>
<div style="left:46px;top:197px;width:1px;height:252px;background:#f0f0f2;"></div>
<div style="left:83px;top:197px;width:1px;height:252px;background:#f0f0f2;"></div>
<div style="left:155px;top:197px;width:1px;height:252px;background:#f0f0f2;"></div>
<div style="left:337px;top:197px;width:1px;height:252px;background:#f0f0f2;"></div>
<div style="left:408px;top:197px;width:1px;height:252px;background:#f0f0f2;"></div>
<div style="left:445px;top:197px;width:1px;height:252px;background:#f0f0f2;"></div>
<div style="left:518px;top:197px;width:1px;height:252px;background:#f0f0f2;"></div>
<div style="left:14px;top:216px;width:14px;height:1.5px;background:#2fb66a;"></div>
<div style="left:10px;top:219.5px;width:543px;height:17.6px;background:#f5f5f6;"></div>
<div style="left:14px;top:224.5px;width:16.5px;height:9px;background:#22ad58;border-radius:3px;"></div>
<span class="t" style="left:15.7px;top:224.8px;font-size:8px;color:#fff;font-family:"Liberation Mono",monospace;font-weight:bold;transform:scaleX(0.973);">200</span>
<span class="t" style="left:51px;top:223.91px;font-size:9.8px;color:#707075;transform:scaleX(0.645);">GET</span>
<svg style="left:87px;top:222.9px" width="8" height="10" viewBox="0 0 8 10"><path d="M1.800 4.500 V3 a2.200 2.200 0 0 1 4.400 0 V4.500" fill="none" stroke="#9a9a9e" stroke-width="1.300"/><rect x="0.300" y="4.300" width="7.400" height="5.400" rx="0.800" fill="#9a9a9e"/></svg>
<span class="t" style="left:98px;top:223.91px;font-size:9.8px;color:#707075;transform:scaleX(0.892);">www.jamon...</span>
<span class="t" style="left:160px;top:223.91px;font-size:9.8px;color:#707075;transform:scaleX(0.881);">plugin.min.js</span>
<span class="t" style="left:340px;top:223.91px;font-size:9.8px;color:#707075;transform:scaleX(0.831);"><span style="color:#3f86d9">12:2</span> (script)</span>
<span class="t" style="left:413px;top:223.91px;font-size:9.8px;color:#707075;transform:scaleX(0.989);">js</span>
<span class="t" style="left:450px;top:223.91px;font-size:9.8px;color:#707075;transform:scaleX(0.805);">en caché</span>
<span class="t" style="left:522px;top:223.91px;font-size:9.8px;color:#707075;transform:scaleX(0.747);">0 B</span>
<div style="left:14px;top:242.1px;width:16.5px;height:9px;background:#22ad58;border-radius:3px;"></div>
<span class="t" style="left:15.7px;top:242.4px;font-size:8px;color:#fff;font-family:"Liberation Mono",monospace;font-weight:bold;transform:scaleX(0.973);">200</span>
<span class="t" style="left:51px;top:241.51px;font-size:9.8px;color:#707075;transform:scaleX(0.645);">GET</span>
<svg style="left:87px;top:240.5px" width="8" height="10" viewBox="0 0 8 10"><path d="M1.800 4.500 V3 a2.200 2.200 0 0 1 4.400 0 V4.500" fill="none" stroke="#9a9a9e" stroke-width="1.300"/><rect x="0.300" y="4.300" width="7.400" height="5.400" rx="0.800" fill="#9a9a9e"/></svg>
<span class="t" style="left:98px;top:241.51px;font-size:9.8px;color:#707075;transform:scaleX(0.892);">www.jamon...</span>
<span class="t" style="left:160px;top:241.51px;font-size:9.8px;color:#707075;transform:scaleX(0.881);">plugin.min.js</span>
<span class="t" style="left:340px;top:241.51px;font-size:9.8px;color:#707075;transform:scaleX(0.831);"><span style="color:#3f86d9">12:2</span> (script)</span>
<span class="t" style="left:413px;top:241.51px;font-size:9.8px;color:#707075;transform:scaleX(0.989);">js</span>
<span class="t" style="left:450px;top:241.51px;font-size:9.8px;color:#707075;transform:scaleX(0.805);">en caché</span>
<span class="t" style="left:522px;top:241.51px;font-size:9.8px;color:#707075;transform:scaleX(0.747);">0 B</span>
<div style="left:10px;top:254.7px;width:543px;height:17.6px;background:#f5f5f6;"></div>
<div style="left:14px;top:259.7px;width:16.5px;height:9px;background:#22ad58;border-radius:3px;"></div>
<span class="t" style="left:15.7px;top:260px;font-size:8px;color:#fff;font-family:"Liberation Mono",monospace;font-weight:bold;transform:scaleX(0.973);">200</span>
<span class="t" style="left:51px;top:259.11px;font-size:9.8px;color:#707075;transform:scaleX(0.645);">GET</span>
<svg style="left:87px;top:258.1px" width="8" height="10" viewBox="0 0 8 10"><path d="M1.800 4.500 V3 a2.200 2.200 0 0 1 4.400 0 V4.500" fill="none" stroke="#9a9a9e" stroke-width="1.300"/><rect x="0.300" y="4.300" width="7.400" height="5.400" rx="0.800" fill="#9a9a9e"/></svg>
<span class="t" style="left:98px;top:259.11px;font-size:9.8px;color:#707075;transform:scaleX(0.892);">www.jamon...</span>
<span class="t" style="left:160px;top:259.11px;font-size:9.8px;color:#707075;transform:scaleX(0.881);">plugin.min.js</span>
<span class="t" style="left:340px;top:259.11px;font-size:9.8px;color:#707075;transform:scaleX(0.831);"><span style="color:#3f86d9">12:2</span> (script)</span>
<span class="t" style="left:413px;top:259.11px;font-size:9.8px;color:#707075;transform:scaleX(0.989);">js</span>
<span class="t" style="left:450px;top:259.11px;font-size:9.8px;color:#707075;transform:scaleX(0.805);">en caché</span>
<span class="t" style="left:522px;top:259.11px;font-size:9.8px;color:#707075;transform:scaleX(0.747);">0 B</span>
<div style="left:14px;top:277.3px;width:16.5px;height:9px;background:#22ad58;border-radius:3px;"></div>
<span class="t" style="left:15.7px;top:277.6px;font-size:8px;color:#fff;font-family:"Liberation Mono",monospace;font-weight:bold;transform:scaleX(0.973);">200</span>
<span class="t" style="left:51px;top:276.71px;font-size:9.8px;color:#707075;transform:scaleX(0.645);">GET</span>
<svg style="left:87px;top:275.7px" width="8" height="10" viewBox="0 0 8 10"><path d="M1.800 4.500 V3 a2.200 2.200 0 0 1 4.400 0 V4.500" fill="none" stroke="#9a9a9e" stroke-width="1.300"/><rect x="0.300" y="4.300" width="7.400" height="5.400" rx="0.800" fill="#9a9a9e"/></svg>
<span class="t" style="left:98px;top:276.71px;font-size:9.8px;color:#707075;transform:scaleX(0.892);">www.jamon...</span>
<span class="t" style="left:160px;top:276.71px;font-size:9.8px;color:#707075;transform:scaleX(0.881);">plugin.min.js</span>
<span class="t" style="left:340px;top:276.71px;font-size:9.8px;color:#707075;transform:scaleX(0.831);"><span style="color:#3f86d9">12:2</span> (script)</span>
<span class="t" style="left:413px;top:276.71px;font-size:9.8px;color:#707075;transform:scaleX(0.989);">js</span>
<span class="t" style="left:450px;top:276.71px;font-size:9.8px;color:#707075;transform:scaleX(0.805);">en caché</span>
<span class="t" style="left:522px;top:276.71px;font-size:9.8px;color:#707075;transform:scaleX(0.781);">698 B</span>
<div style="left:10px;top:289.9px;width:543px;height:17.6px;background:#f5f5f6;"></div>
<div style="left:14px;top:294.9px;width:16.5px;height:9px;background:#22ad58;border-radius:3px;"></div>
<span class="t" style="left:15.7px;top:295.2px;font-size:8px;color:#fff;font-family:"Liberation Mono",monospace;font-weight:bold;transform:scaleX(0.973);">200</span>
<span class="t" style="left:51px;top:294.31px;font-size:9.8px;color:#707075;transform:scaleX(0.645);">GET</span>
<svg style="left:87px;top:293.3px" width="8" height="10" viewBox="0 0 8 10"><path d="M1.800 4.500 V3 a2.200 2.200 0 0 1 4.400 0 V4.500" fill="none" stroke="#9a9a9e" stroke-width="1.300"/><rect x="0.300" y="4.300" width="7.400" height="5.400" rx="0.800" fill="#9a9a9e"/></svg>
<span class="t" style="left:98px;top:294.31px;font-size:9.8px;color:#707075;transform:scaleX(0.892);">www.jamon...</span>
<span class="t" style="left:160px;top:294.31px;font-size:9.8px;color:#707075;transform:scaleX(0.881);">plugin.min.js</span>
<span class="t" style="left:340px;top:294.31px;font-size:9.8px;color:#707075;transform:scaleX(0.831);"><span style="color:#3f86d9">12:2</span> (script)</span>
<span class="t" style="left:413px;top:294.31px;font-size:9.8px;color:#707075;transform:scaleX(0.989);">js</span>
<span class="t" style="left:450px;top:294.31px;font-size:9.8px;color:#707075;transform:scaleX(0.805);">en caché</span>
<span class="t" style="left:522px;top:294.31px;font-size:9.8px;color:#707075;transform:scaleX(0.747);">0 B</span>
<div style="left:14px;top:312.5px;width:16.5px;height:9px;background:#22ad58;border-radius:3px;"></div>
<span class="t" style="left:15.7px;top:312.8px;font-size:8px;color:#fff;font-family:"Liberation Mono",monospace;font-weight:bold;transform:scaleX(0.973);">200</span>
<span class="t" style="left:51px;top:311.91px;font-size:9.8px;color:#939398;transform:scaleX(0.645);">GET</span>
<svg style="left:87px;top:310.9px" width="8" height="10" viewBox="0 0 8 10"><path d="M1.800 4.500 V3 a2.200 2.200 0 0 1 4.400 0 V4.500" fill="none" stroke="#c0c0c4" stroke-width="1.300"/><rect x="0.300" y="4.300" width="7.400" height="5.400" rx="0.800" fill="#c0c0c4"/></svg>
<span class="t" style="left:98px;top:311.91px;font-size:9.8px;color:#939398;transform:scaleX(0.892);">www.jamon...</span>
<span class="t" style="left:160px;top:311.91px;font-size:9.8px;color:#939398;transform:scaleX(0.881);">plugin.min.js</span>
<span class="t" style="left:340px;top:311.91px;font-size:9.8px;color:#939398;transform:scaleX(0.831);"><span style="color:#6ea3e2">12:2</span> (script)</span>
<span class="t" style="left:413px;top:311.91px;font-size:9.8px;color:#939398;transform:scaleX(0.989);">js</span>
<span class="t" style="left:450px;top:311.91px;font-size:9.8px;color:#939398;transform:scaleX(0.805);">en caché</span>
<span class="t" style="left:522px;top:311.91px;font-size:9.8px;color:#939398;transform:scaleX(0.747);">0 B</span>
<div style="left:10px;top:325.1px;width:543px;height:17.6px;background:#f5f5f6;"></div>
<span class="t" style="left:51px;top:329.51px;font-size:9.8px;color:#38383d;transform:scaleX(0.645);">GET</span>
<svg style="left:87px;top:328.5px" width="8" height="10" viewBox="0 0 8 10"><path d="M1.800 4.500 V3 a2.200 2.200 0 0 1 4.400 0 V4.500" fill="none" stroke="#77777b" stroke-width="1.300"/><rect x="0.300" y="4.300" width="7.400" height="5.400" rx="0.800" fill="#77777b"/></svg>
<span class="t" style="left:98px;top:329.51px;font-size:9.8px;color:#38383d;transform:scaleX(0.892);">www.jamon...</span>
<span class="t" style="left:160px;top:329.51px;font-size:9.8px;color:#38383d;transform:scaleX(0.884);">app_icon.png</span>
<span class="t" style="left:340px;top:329.51px;font-size:9.8px;color:#1a54b8;font-weight:bold;transform:scaleX(0.800);">FaviconLoader....</span>
<span class="t" style="left:413px;top:329.51px;font-size:9.8px;color:#38383d;transform:scaleX(0.918);">html</span>
<span class="t" style="left:450px;top:329.51px;font-size:9.8px;color:#38383d;transform:scaleX(0.813);">0 B (ejecutado)</span>
<span class="t" style="left:522px;top:329.51px;font-size:9.8px;color:#38383d;transform:scaleX(0.747);">0 B</span>
<span class="t" style="left:51px;top:347.11px;font-size:9.8px;color:#38383d;transform:scaleX(0.645);">GET</span>
<svg style="left:87px;top:346.1px" width="8" height="10" viewBox="0 0 8 10"><path d="M1.800 4.500 V3 a2.200 2.200 0 0 1 4.400 0 V4.500" fill="none" stroke="#77777b" stroke-width="1.300"/><rect x="0.300" y="4.300" width="7.400" height="5.400" rx="0.800" fill="#77777b"/></svg>
<span class="t" style="left:98px;top:347.11px;font-size:9.8px;color:#38383d;transform:scaleX(0.892);">www.jamon...</span>
<span class="t" style="left:160px;top:347.11px;font-size:9.8px;color:#38383d;transform:scaleX(0.864);">favicon.ico</span>
<span class="t" style="left:340px;top:347.11px;font-size:9.8px;color:#1a54b8;font-weight:bold;transform:scaleX(0.800);">FaviconLoader....</span>
<span class="t" style="left:413px;top:347.11px;font-size:9.8px;color:#38383d;transform:scaleX(0.937);">vnd....</span>
<span class="t" style="left:450px;top:347.11px;font-size:9.8px;color:#38383d;transform:scaleX(0.770);">139.96 KB (ejec...</span>
<span class="t" style="left:522px;top:347.11px;font-size:9.8px;color:#38383d;transform:scaleX(0.795);">139.9...</span>
<div style="left:10px;top:360.3px;width:543px;height:17.6px;background:#f5f5f6;"></div>
<div style="left:14px;top:365.3px;width:16.5px;height:9px;background:#dd0fa6;border-radius:3px;"></div>
<span class="t" style="left:15.7px;top:365.6px;font-size:8px;color:#fff;font-family:"Liberation Mono",monospace;font-weight:bold;transform:scaleX(0.973);">500</span>
<span class="t" style="left:51px;top:364.71px;font-size:9.8px;color:#38383d;transform:scaleX(0.645);">GET</span>
<svg style="left:87px;top:363.7px" width="8" height="10" viewBox="0 0 8 10"><path d="M1.800 4.500 V3 a2.200 2.200 0 0 1 4.400 0 V4.500" fill="none" stroke="#77777b" stroke-width="1.300"/><rect x="0.300" y="4.300" width="7.400" height="5.400" rx="0.800" fill="#77777b"/></svg>
<span class="t" style="left:98px;top:364.71px;font-size:9.8px;color:#38383d;transform:scaleX(0.892);">www.jamon...</span>
<span class="t" style="left:160px;top:364.71px;font-size:9.8px;color:#38383d;transform:scaleX(0.811);">46-47-48-49?_token=V-DRXNVjcxPdIs_NzCy_...</span>
<span class="t" style="left:340px;top:364.71px;font-size:9.8px;color:#1a54b8;font-weight:bold;transform:scaleX(0.800);">main.bundle.js:...</span>
<span class="t" style="left:413px;top:364.71px;font-size:9.8px;color:#38383d;transform:scaleX(0.918);">html</span>
<span class="t" style="left:450px;top:364.71px;font-size:9.8px;color:#38383d;transform:scaleX(0.815);">719 B (ejecutado)</span>
<span class="t" style="left:522px;top:364.71px;font-size:9.8px;color:#38383d;transform:scaleX(0.781);">495 B</span>
<div style="left:14px;top:382.9px;width:16.5px;height:9px;background:#b93fe0;border-radius:3px;"></div>
<span class="t" style="left:15.7px;top:383.2px;font-size:8px;color:#fff;font-family:"Liberation Mono",monospace;font-weight:bold;transform:scaleX(0.973);">400</span>
<span class="t" style="left:51px;top:382.31px;font-size:9.8px;color:#38383d;transform:scaleX(0.712);">POST</span>
<svg style="left:87px;top:381.3px" width="8" height="10" viewBox="0 0 8 10"><path d="M1.800 4.500 V3 a2.200 2.200 0 0 1 4.400 0 V4.500" fill="none" stroke="#77777b" stroke-width="1.300"/><rect x="0.300" y="4.300" width="7.400" height="5.400" rx="0.800" fill="#77777b"/></svg>
<span class="t" style="left:98px;top:382.31px;font-size:9.8px;color:#38383d;transform:scaleX(0.892);">www.jamon...</span>
<span class="t" style="left:160px;top:382.31px;font-size:9.8px;color:#38383d;transform:scaleX(0.801);">12?_token=V-DRXNVjcxPdIs_NzCy_LoKWOp4...</span>
<span class="t" style="left:340px;top:382.31px;font-size:9.8px;color:#1a54b8;font-weight:bold;transform:scaleX(0.800);">main.bundle.js:...</span>
<span class="t" style="left:413px;top:382.31px;font-size:9.8px;color:#38383d;transform:scaleX(0.945);">json</span>
<span class="t" style="left:450px;top:382.31px;font-size:9.8px;color:#38383d;transform:scaleX(0.746);">1.07 KB</span>
<span class="t" style="left:522px;top:382.31px;font-size:9.8px;color:#38383d;transform:scaleX(0.781);">889 B</span>
<div style="left:10px;top:395.5px;width:543px;height:17.6px;background:#f5f5f6;"></div>
<div style="left:14px;top:400.5px;width:16.5px;height:9px;background:#b93fe0;border-radius:3px;"></div>
<span class="t" style="left:15.7px;top:400.8px;font-size:8px;color:#fff;font-family:"Liberation Mono",monospace;font-weight:bold;transform:scaleX(0.973);">400</span>
<span class="t" style="left:51px;top:399.91px;font-size:9.8px;color:#38383d;transform:scaleX(0.712);">POST</span>
<svg style="left:87px;top:398.9px" width="8" height="10" viewBox="0 0 8 10"><path d="M1.800 4.500 V3 a2.200 2.200 0 0 1 4.400 0 V4.500" fill="none" stroke="#77777b" stroke-width="1.300"/><rect x="0.300" y="4.300" width="7.400" height="5.400" rx="0.800" fill="#77777b"/></svg>
<span class="t" style="left:98px;top:399.91px;font-size:9.8px;color:#38383d;transform:scaleX(0.892);">www.jamon...</span>
<span class="t" style="left:160px;top:399.91px;font-size:9.8px;color:#38383d;transform:scaleX(0.801);">12?_token=V-DRXNVjcxPdIs_NzCy_LoKWOp4...</span>
<span class="t" style="left:340px;top:399.91px;font-size:9.8px;color:#1a54b8;font-weight:bold;transform:scaleX(0.800);">main.bundle.js:...</span>
<span class="t" style="left:413px;top:399.91px;font-size:9.8px;color:#38383d;transform:scaleX(0.945);">json</span>
<span class="t" style="left:450px;top:399.91px;font-size:9.8px;color:#38383d;transform:scaleX(0.746);">1.07 KB</span>
<span class="t" style="left:522px;top:399.91px;font-size:9.8px;color:#38383d;transform:scaleX(0.781);">889 B</span>
<div style="left:14px;top:418.1px;width:16.5px;height:9px;background:#0f8a1e;border-radius:3px;"></div>
<span class="t" style="left:15.7px;top:418.4px;font-size:8px;color:#fff;font-family:"Liberation Mono",monospace;font-weight:bold;transform:scaleX(0.973);">200</span>
<span class="t" style="left:51px;top:417.51px;font-size:9.8px;color:#38383d;transform:scaleX(0.712);">POST</span>
<svg style="left:87px;top:416.5px" width="8" height="10" viewBox="0 0 8 10"><path d="M1.800 4.500 V3 a2.200 2.200 0 0 1 4.400 0 V4.500" fill="none" stroke="#77777b" stroke-width="1.300"/><rect x="0.300" y="4.300" width="7.400" height="5.400" rx="0.800" fill="#77777b"/></svg>
<span class="t" style="left:98px;top:417.51px;font-size:9.8px;color:#38383d;transform:scaleX(0.892);">www.jamon...</span>
<span class="t" style="left:160px;top:417.51px;font-size:9.8px;color:#38383d;transform:scaleX(0.842);">notifications?_token=V-DRXNVjcxPdIs_NzCy...</span>
<span class="t" style="left:340px;top:417.51px;font-size:9.8px;color:#1a54b8;font-weight:bold;transform:scaleX(0.800);">main.bundle.js:...</span>
<span class="t" style="left:413px;top:417.51px;font-size:9.8px;color:#38383d;transform:scaleX(0.945);">json</span>
<span class="t" style="left:450px;top:417.51px;font-size:9.8px;color:#38383d;transform:scaleX(0.781);">295 B</span>
<span class="t" style="left:522px;top:417.51px;font-size:9.8px;color:#38383d;transform:scaleX(0.781);">120 B</span>
<div style="left:10px;top:430.2px;width:543px;height:18.3px;background:#0a74e6;"></div>
<div style="left:14px;top:435.7px;width:16.5px;height:9px;background:#b93fe0;border-radius:3px;"></div>
<span class="t" style="left:15.7px;top:436px;font-size:8px;color:#fff;font-family:"Liberation Mono",monospace;font-weight:bold;transform:scaleX(0.973);">400</span>
<span class="t" style="left:51px;top:435.11px;font-size:9.8px;color:#fff;transform:scaleX(0.712);">POST</span>
<svg style="left:87px;top:434.1px" width="8" height="10" viewBox="0 0 8 10"><path d="M1.800 4.500 V3 a2.200 2.200 0 0 1 4.400 0 V4.500" fill="none" stroke="#fff" stroke-width="1.300"/><rect x="0.300" y="4.300" width="7.400" height="5.400" rx="0.800" fill="#fff"/></svg>
<span class="t" style="left:98px;top:435.11px;font-size:9.8px;color:#fff;transform:scaleX(0.892);">www.jamon...</span>
<span class="t" style="left:160px;top:435.11px;font-size:9.8px;color:#fff;transform:scaleX(0.801);">12?_token=V-DRXNVjcxPdIs_NzCy_LoKWOp4...</span>
<span class="t" style="left:340px;top:435.11px;font-size:9.8px;color:#fff;transform:scaleX(0.864);">main.bundle.js:...</span>
<span class="t" style="left:413px;top:435.11px;font-size:9.8px;color:#fff;transform:scaleX(0.945);">json</span>
<span class="t" style="left:450px;top:435.11px;font-size:9.8px;color:#fff;transform:scaleX(0.746);">1.07 KB</span>
<span class="t" style="left:522px;top:435.11px;font-size:9.8px;color:#fff;transform:scaleX(0.781);">889 B</span>
<div style="left:553px;top:197px;width:12px;height:252px;background:#f0f0f0;"></div>
<svg style="left:556px;top:203px;" width="8" height="6" viewBox="0 0 8 6"><path d="M1 5 L4 1.800 L7 5" fill="none" stroke="#505050" stroke-width="1.300"/></svg>
<svg style="left:556px;top:440px;" width="8" height="6" viewBox="0 0 8 6"><path d="M1 1 L4 4.200 L7 1" fill="none" stroke="#505050" stroke-width="1.300"/></svg>
<div style="left:554px;top:389px;width:11px;height:47px;background:#c4c4c4;"></div>
<div style="left:565px;top:197px;width:1px;height:269px;background:#d7d7db;"></div>
<div style="left:10px;top:448.6px;width:555px;height:17.4px;background:#f9f9fa;border-top:1px solid #e0e0e2;"></div>
<svg style="left:17px;top:452px;" width="12" height="13" viewBox="0 0 12 13"><circle cx="6" cy="7.500" r="4.700" fill="none" stroke="#2a2a2e" stroke-width="1.300"/><path d="M4.300 0.800 H7.700 M6 0.800 V2.800 M6 7.500 L8.300 5 M9.500 3 L10.500 4" stroke="#2a2a2e" stroke-width="1.200" fill="none"/></svg>
<span class="t" style="left:40px;top:454.91px;font-size:9.3px;color:#2a2a2e;transform:scaleX(0.905);">60 solicitudes</span>
<div style="left:99px;top:451px;width:1px;height:13px;background:#e0e0e2;"></div>
<span class="t" style="left:107px;top:454.91px;font-size:9.3px;color:#2a2a2e;transform:scaleX(0.869);">3.05 MB / 872.73 KB transferido</span>
<div style="left:230px;top:451px;width:1px;height:13px;background:#e0e0e2;"></div>
<span class="t" style="left:238px;top:454.91px;font-size:9.3px;color:#2a2a2e;transform:scaleX(0.882);">Finalizar: 2.58 min</span>
<div style="left:312px;top:451px;width:1px;height:13px;background:#e0e0e2;"></div>
<span class="t" style="left:321px;top:454.91px;font-size:9.3px;color:#1a73c9;transform:scaleX(0.890);">DOMContentLoaded: 4.61 s</span>
<div style="left:432px;top:451px;width:1px;height:13px;background:#e0e0e2;"></div>
<span class="t" style="left:440px;top:454.91px;font-size:9.3px;color:#d6189e;transform:scaleX(0.874);">load: 5.21 s</span>
<div style="left:566px;top:197px;width:403px;height:18px;background:#f9f9fa;border-bottom:1px solid #e0e0e2;"></div>
<svg style="left:571px;top:200px;" width="11" height="11" viewBox="0 0 11 11"><rect x="0.600" y="0.600" width="9.800" height="9.800" fill="none" stroke="#2a2a2e" stroke-width="1.100"/><path d="M7.800 0.600 V10.400" stroke="#2a2a2e" stroke-width="1"/><path d="M2.800 3 L5.800 5.500 L2.800 8z" fill="none" stroke="#2a2a2e" stroke-width="0.900"/></svg>
<span class="t" style="left:594px;top:202.41px;font-size:9.8px;color:#1c1c20;transform:scaleX(0.842);">Encabezados</span>
<span class="t" style="left:660px;top:202.41px;font-size:9.8px;color:#1c1c20;transform:scaleX(0.876);">Cookies</span>
<span class="t" style="left:707px;top:202.41px;font-size:9.8px;color:#1c1c20;transform:scaleX(0.918);">Solicitud</span>
<div style="left:749px;top:196px;width:54px;height:2px;background:#0a84ff;"></div>
<span class="t" style="left:757px;top:202.41px;font-size:9.8px;color:#1a73c9;transform:scaleX(0.833);">Respuesta</span>
<span class="t" style="left:812px;top:202.41px;font-size:9.8px;color:#1c1c20;transform:scaleX(0.887);">Tiempos</span>
<span class="t" style="left:861px;top:202.41px;font-size:9.8px;color:#1c1c20;transform:scaleX(0.883);">Seguimiento de pila</span>
<span class="t" style="left:954px;top:202.41px;font-size:9.8px;color:#1c1c20;transform:scaleX(0.764);">S</span>
<svg style="left:960px;top:204px;" width="7" height="5" viewBox="0 0 7 5"><path d="M0.300 0.800 H6.700 L3.500 4.500z" fill="#2a2a2e"/></svg>
<div style="left:566px;top:215px;width:403px;height:18px;background:#fff;border-bottom:1px solid #e0e0e2;"></div>
<svg style="left:573px;top:221px;" width="7" height="8" viewBox="0 0 7 8"><path d="M0.500 0.500 H6.500 L4.200 3.500 V7.200 L2.800 6.200 V3.500z" fill="none" stroke="#9a9a9e" stroke-width="0.900"/></svg>
<span class="t" style="left:583px;top:220.41px;font-size:9.8px;color:#a0a0a4;transform:scaleX(0.869);">Propiedades del filtro</span>
<div style="left:566px;top:233px;width:403px;height:19px;background:#f7f7f9;border-bottom:1px solid #e0e0e2;"></div>
<svg style="left:571px;top:241px;" width="7" height="5" viewBox="0 0 7 5"><path d="M0.300 0.500 H6.700 L3.500 4.500z" fill="#77777b"/></svg>
<span class="t" style="left:581px;top:238.41px;font-size:9.8px;color:#1c1c20;transform:scaleX(0.765);">JSON</span>
<svg style="left:581px;top:257.5px" width="7" height="5" viewBox="0 0 7 5"><path d="M0.300 0.500 H6.700 L3.500 4.500z" fill="#77777b"/></svg>
<span class="t" style="left:590px;top:254.91px;font-size:9.8px;color:#1a7cc4;transform:scaleX(0.857);">combination_46_attribute_ecotax:</span>
<span class="t" style="left:720px;top:254.91px;font-size:9.8px;color:#2a2a2e;transform:scaleX(0.863);"><span style="color:#1a7cc4">[</span> "This value should not be blank." <span style="color:#1a7cc4">]</span></span>
<span class="t" style="left:602px;top:269.61px;font-size:9.8px;color:#1a7cc4;transform:scaleX(0.795);">0:</span>
<span class="t" style="left:612px;top:269.61px;font-size:9.8px;color:#2a2a2e;transform:scaleX(0.866);">"This value should not be blank."</span>
<svg style="left:581px;top:286.9px" width="7" height="5" viewBox="0 0 7 5"><path d="M0.300 0.500 H6.700 L3.500 4.500z" fill="#77777b"/></svg>
<span class="t" style="left:590px;top:284.31px;font-size:9.8px;color:#1a7cc4;transform:scaleX(0.871);">combination_46_attribute_minimal_quantity:</span>
<span class="t" style="left:761px;top:284.31px;font-size:9.8px;color:#2a2a2e;transform:scaleX(0.863);"><span style="color:#1a7cc4">[</span> "This value should not be blank." <span style="color:#1a7cc4">]</span></span>
<span class="t" style="left:602px;top:299.01px;font-size:9.8px;color:#1a7cc4;transform:scaleX(0.795);">0:</span>
<span class="t" style="left:612px;top:299.01px;font-size:9.8px;color:#2a2a2e;transform:scaleX(0.866);">"This value should not be blank."</span>
<svg style="left:581px;top:316.3px" width="7" height="5" viewBox="0 0 7 5"><path d="M0.300 0.500 H6.700 L3.500 4.500z" fill="#77777b"/></svg>
<span class="t" style="left:590px;top:313.71px;font-size:9.8px;color:#1a7cc4;transform:scaleX(0.879);">combination_46_attribute_quantity:</span>
<span class="t" style="left:728px;top:313.71px;font-size:9.8px;color:#2a2a2e;transform:scaleX(0.863);"><span style="color:#1a7cc4">[</span> "This value should not be blank." <span style="color:#1a7cc4">]</span></span>
<span class="t" style="left:602px;top:328.41px;font-size:9.8px;color:#1a7cc4;transform:scaleX(0.795);">0:</span>
<span class="t" style="left:612px;top:328.41px;font-size:9.8px;color:#2a2a2e;transform:scaleX(0.866);">"This value should not be blank."</span>
<svg style="left:581px;top:345.7px" width="7" height="5" viewBox="0 0 7 5"><path d="M0.300 0.500 H6.700 L3.500 4.500z" fill="#77777b"/></svg>
<span class="t" style="left:590px;top:343.11px;font-size:9.8px;color:#1a7cc4;transform:scaleX(0.857);">combination_47_attribute_ecotax:</span>
<span class="t" style="left:720px;top:343.11px;font-size:9.8px;color:#2a2a2e;transform:scaleX(0.863);"><span style="color:#1a7cc4">[</span> "This value should not be blank." <span style="color:#1a7cc4">]</span></span>
<span class="t" style="left:602px;top:357.81px;font-size:9.8px;color:#1a7cc4;transform:scaleX(0.795);">0:</span>
<span class="t" style="left:612px;top:357.81px;font-size:9.8px;color:#2a2a2e;transform:scaleX(0.866);">"This value should not be blank."</span>
<svg style="left:581px;top:375.1px" width="7" height="5" viewBox="0 0 7 5"><path d="M0.300 0.500 H6.700 L3.500 4.500z" fill="#77777b"/></svg>
<span class="t" style="left:590px;top:372.51px;font-size:9.8px;color:#1a7cc4;transform:scaleX(0.871);">combination_47_attribute_minimal_quantity:</span>
<span class="t" style="left:761px;top:372.51px;font-size:9.8px;color:#2a2a2e;transform:scaleX(0.863);"><span style="color:#1a7cc4">[</span> "This value should not be blank." <span style="color:#1a7cc4">]</span></span>
<span class="t" style="left:602px;top:387.21px;font-size:9.8px;color:#1a7cc4;transform:scaleX(0.795);">0:</span>
<span class="t" style="left:612px;top:387.21px;font-size:9.8px;color:#2a2a2e;transform:scaleX(0.866);">"This value should not be blank."</span>
<div style="left:566px;top:400.0px;width:391px;height:14px;background:#e8f3fb;"></div>
<svg style="left:581px;top:404.5px" width="7" height="5" viewBox="0 0 7 5"><path d="M0.300 0.500 H6.700 L3.500 4.500z" fill="#77777b"/></svg>
<span class="t" style="left:590px;top:401.91px;font-size:9.8px;color:#1a7cc4;transform:scaleX(0.879);">combination_47_attribute_quantity:</span>
<span class="t" style="left:728px;top:401.91px;font-size:9.8px;color:#2a2a2e;transform:scaleX(0.863);"><span style="color:#1a7cc4">[</span> "This value should not be blank." <span style="color:#1a7cc4">]</span></span>
<span class="t" style="left:602px;top:416.61px;font-size:9.8px;color:#1a7cc4;transform:scaleX(0.795);">0:</span>
<span class="t" style="left:612px;top:416.61px;font-size:9.8px;color:#2a2a2e;transform:scaleX(0.866);">"This value should not be blank."</span>
<svg style="left:581px;top:433.9px" width="7" height="5" viewBox="0 0 7 5"><path d="M0.300 0.500 H6.700 L3.500 4.500z" fill="#77777b"/></svg>
<span class="t" style="left:590px;top:431.31px;font-size:9.8px;color:#1a7cc4;transform:scaleX(0.857);">combination_48_attribute_ecotax:</span>
<span class="t" style="left:720px;top:431.31px;font-size:9.8px;color:#2a2a2e;transform:scaleX(0.863);"><span style="color:#1a7cc4">[</span> "This value should not be blank." <span style="color:#1a7cc4">]</span></span>
<div style="left:957px;top:252px;width:11.5px;height:196px;background:#f0f0f0;"></div>
<svg style="left:959px;top:256px;" width="8" height="6" viewBox="0 0 8 6"><path d="M1 5 L4 1.800 L7 5" fill="none" stroke="#505050" stroke-width="1.300"/></svg>
<svg style="left:959px;top:439px;" width="8" height="6" viewBox="0 0 8 6"><path d="M1 1 L4 4.200 L7 1" fill="none" stroke="#505050" stroke-width="1.300"/></svg>
<div style="left:957.5px;top:268px;width:11px;height:83.5px;background:#c8c8c8;"></div>
<div style="left:566px;top:448px;width:403px;height:18px;background:#fafafb;border-top:1px solid #e0e0e2;"></div>
<svg style="left:572px;top:454px;" width="5" height="7" viewBox="0 0 5 7"><path d="M0.500 0.300 L4.500 3.500 L0.500 6.700z" fill="#77777b"/></svg>
<span class="t" style="left:581px;top:452.91px;font-size:9.8px;color:#1c1c20;transform:scaleX(0.833);">Respuesta de carga</span>
</body></html>
